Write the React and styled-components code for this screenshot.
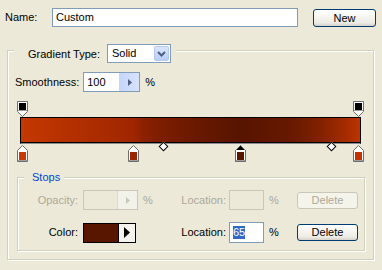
import React from 'react'
import styled, { createGlobalStyle } from 'styled-components'

const GlobalStyle = createGlobalStyle`
  html, body {
    margin: 0;
    padding: 0;
    background: #ece9d8;
  }
  body {
    font-family: "Liberation Sans", Arial, sans-serif;
    font-size: 11px;
    color: #000;
  }
`

const Page = styled.div`
  width: 382px;
  height: 270px;
  background: #ece9d8;
  overflow: hidden;
`

const TopRow = styled.div`
  display: flex;
  align-items: flex-start;
  padding: 8px 0 0 5px;
`

const Label = styled.span`
  display: block;
  width: ${p => p.$w || 'auto'};
  text-align: ${p => (p.$right ? 'right' : 'left')};
  color: ${p => (p.$disabled ? '#aca899' : '#000')};
  white-space: nowrap;
  line-height: 13px;
`

const NameLabel = styled(Label)`
  margin-top: 3px;
`

const TextInput = styled.div`
  box-sizing: border-box;
  width: ${p => p.$w}px;
  height: ${p => p.$h || 19}px;
  margin-left: ${p => p.$ml || 0}px;
  border: 1px solid ${p => (p.$disabled ? '#c9c7ba' : '#7f9db9')};
  background: ${p => (p.$disabled ? '#ece9d8' : '#fff')};
  display: flex;
  align-items: center;
  padding-left: 3px;
  line-height: 13px;
`

const Button = styled.div`
  box-sizing: border-box;
  width: ${p => p.$w || 61}px;
  height: ${p => p.$h || 17}px;
  margin-left: ${p => p.$ml || 0}px;
  margin-top: ${p => p.$mt || 0}px;
  border: 1px solid ${p => (p.$disabled ? '#c9c7ba' : '#003c74')};
  border-radius: 3px;
  background: ${p =>
    p.$disabled
      ? '#f5f4ea'
      : 'linear-gradient(#ffffff 0%, #f4f3ee 50%, #ecebe6 80%, #d6d0c5 100%)'};
  color: ${p => (p.$disabled ? '#aca899' : '#000')};
  display: flex;
  align-items: center;
  justify-content: center;
  line-height: 13px;
`

const Group = styled.div`
  box-sizing: border-box;
  position: relative;
  width: ${p => p.$w}px;
  height: ${p => p.$h}px;
  margin-left: ${p => p.$ml}px;
  margin-top: ${p => p.$mt}px;
  border: 1px solid #d0d0bf;
  box-shadow: inset 1px 1px 0 #fff, 1px 1px 0 #fff;
`

const Legend = styled.div`
  display: flex;
  width: fit-content;
  align-items: center;
  background: #ece9d8;
  margin-top: ${p => p.$mt}px;
  margin-left: ${p => p.$ml}px;
  padding: 0 ${p => p.$pr}px 0 ${p => p.$pl}px;
  height: ${p => p.$h}px;
`

const LegendTitle = styled.span`
  color: #0046d5;
  line-height: 13px;
`

const Select = styled.div`
  box-sizing: border-box;
  width: 64px;
  height: 19px;
  margin-left: 7px;
  border: 1px solid #7f9db9;
  background: #fff;
  display: flex;
  align-items: stretch;
`

const SelectValue = styled.span`
  flex: 1;
  padding-left: 4px;
  line-height: 17px;
`

const DropButton = styled.div`
  width: 15px;
  margin: 1px;
  border-radius: 2px;
  background: linear-gradient(#dbe6fd, #b9cdf8);
  border: 1px solid #b5c8f2;
  box-sizing: border-box;
  display: flex;
  align-items: center;
  justify-content: center;
`

const SmoothRow = styled.div`
  display: flex;
  align-items: center;
  margin: 9px 0 0 7px;
`

const Spinner = styled.div`
  box-sizing: border-box;
  width: ${p => p.$w || 57}px;
  height: ${p => p.$h || 20}px;
  margin-left: ${p => p.$ml || 0}px;
  border: 1px solid ${p => (p.$disabled ? '#c9c7ba' : '#7f9db9')};
  background: ${p => (p.$disabled ? '#ece9d8' : '#fff')};
  display: flex;
  align-items: stretch;
`

const SpinValue = styled.span`
  flex: 1;
  padding-left: 3px;
  line-height: 18px;
`

const SpinArrow = styled.div`
  width: 19px;
  background: ${p => (p.$disabled ? '#f2f1ea' : 'linear-gradient(90deg, #c6d6fb, #d7e2fc)')};
  border-left: 1px solid ${p => (p.$disabled ? '#dddbd0' : '#c6d6fb')};
  display: flex;
  align-items: center;
  justify-content: center;
`

const Pct = styled.span`
  display: block;
  width: ${p => p.$w || 11}px;
  margin-left: ${p => p.$ml || 5}px;
  color: ${p => (p.$disabled ? '#aca899' : '#000')};
  line-height: 13px;
`

const GradientArea = styled.div`
  position: relative;
  width: 341px;
  margin: 9px 0 0 12px;
  padding: 16px 0 18px;
`

const StopTrack = styled.div`
  position: absolute;
  left: 2px;
  right: 3px;
  top: 0;
  bottom: 0;
`

const Bar = styled.div`
  box-sizing: border-box;
  height: 27px;
  border: 1px solid #000;
  border-bottom: 1px solid #8c8c8c;
  background: linear-gradient(
    90deg,
    #c43800 0%,
    #a02600 33%,
    42%,
    #571400 65%,
    90%,
    #bc3300 100%
  );
  box-shadow: inset 0 -1px 0 #000;
`

const Marker = styled.svg`
  position: absolute;
  left: calc(${p => p.$pos}% - 5px);
  ${p => (p.$top ? 'top: 0;' : 'bottom: 0;')}
`

const Diamond = styled.div`
  position: absolute;
  left: calc(${p => p.$pos}% - 3px);
  bottom: 12px;
  width: 5px;
  height: 5px;
  border: 1px solid #000;
  background: #fff;
  transform: rotate(45deg);
`

const StopsGroup = styled(Group)``

const StopRow = styled.div`
  display: flex;
  align-items: center;
  margin-top: ${p => p.$mt}px;
`

const Swatch = styled.div`
  box-sizing: border-box;
  width: 53px;
  height: 20px;
  margin-left: 5px;
  margin-right: 2px;
  border: 1px solid #000;
  display: flex;
  align-items: stretch;
`

const SwatchColor = styled.div`
  flex: 1;
  background: ${p => p.$color};
`

const SwatchArrow = styled.div`
  width: 16px;
  border-left: 1px solid #000;
  background: #f4f3ee;
  display: flex;
  align-items: center;
  justify-content: center;
`

const Selected = styled.span`
  background: #316ac5;
  color: #fff;
  line-height: 13px;
`

const OpacityStop = ({ pos }) => (
  <Marker $top $pos={pos} width="11" height="16" viewBox="0 0 11 16">
    <path d="M0.5 0.5 H10.5 V10.5 L5.5 15.5 L0.5 10.5 Z" fill="#fff" stroke="#6d6d6d" />
    <rect x="2" y="2" width="7" height="7" fill="#000" />
    <rect x="1" y="9" width="9" height="1" fill="#a0a0a0" />
  </Marker>
)

const ColorStop = ({ pos, color, selected }) => (
  <Marker $pos={pos} width="11" height="17" viewBox="0 0 11 17">
    <path
      d="M5.5 0.5 L10.5 5.5 V16.5 H0.5 V5.5 Z"
      fill={selected ? '#000' : '#fff'}
      stroke="#6d6d6d"
    />
    <rect x="1" y="5" width="9" height="11" fill="#fff" />
    <rect x="2" y="7" width="7" height="8" fill={color} />
    <rect x="1" y="15" width="9" height="1" fill="#a0a0a0" />
  </Marker>
)

const App = () => {
  return (
    <Page>
      <GlobalStyle />
      <TopRow>
        <NameLabel $w="47px">Name:</NameLabel>
        <TextInput $w={246}>Custom</TextInput>
        <Button $w={63} $h={18} $ml={15} $mt={1}>New</Button>
      </TopRow>

      <Group $w={367} $h={210} $ml={7} $mt={23}>
        <Legend $mt={-7} $ml={6} $pl={14} $pr={5} $h={19}>
          <span>Gradient Type:</span>
          <Select>
            <SelectValue>Solid</SelectValue>
            <DropButton>
              <svg width="9" height="6" viewBox="0 0 9 6">
                <path d="M1 1 L4.5 4.5 L8 1" fill="none" stroke="#4d6185" strokeWidth="2" />
              </svg>
            </DropButton>
          </Select>
        </Legend>

        <SmoothRow>
          <Label>Smoothness:</Label>
          <Spinner $ml={4} $w={57} $h={20}>
            <SpinValue>100</SpinValue>
            <SpinArrow>
              <svg width="4" height="7" viewBox="0 0 4 7">
                <path d="M0 0 L4 3.5 L0 7 Z" fill="#4d6185" />
              </svg>
            </SpinArrow>
          </Spinner>
          <Pct $ml={5}>%</Pct>
        </SmoothRow>

        <GradientArea>
          <Bar />
          <StopTrack>
            <OpacityStop pos={0} />
            <OpacityStop pos={100} />
            <ColorStop pos={0} color="#c63a08" />
            <ColorStop pos={33} color="#9b2406" />
            <ColorStop pos={65} color="#581500" selected />
            <ColorStop pos={100} color="#c23300" />
            <Diamond $pos={42} />
            <Diamond $pos={92} />
          </StopTrack>
        </GradientArea>

        <StopsGroup $w={348} $h={74} $ml={9} $mt={15}>
          <Legend $mt={-7} $ml={6} $pl={8} $pr={4} $h={13}>
            <LegendTitle>Stops</LegendTitle>
          </Legend>

          <StopRow $mt={6}>
            <Label $w="60px" $right $disabled>Opacity:</Label>
            <Spinner $ml={5} $w={55} $h={20} $disabled>
              <SpinValue />
              <SpinArrow $disabled>
                <svg width="4" height="7" viewBox="0 0 4 7">
                  <path d="M0 0 L4 3.5 L0 7 Z" fill="#c9c7ba" />
                </svg>
              </SpinArrow>
            </Spinner>
            <Pct $disabled>%</Pct>
            <Label $w="72px" $right $disabled>Location:</Label>
            <TextInput $w={35} $h={20} $ml={3} $disabled />
            <Pct $disabled>%</Pct>
            <Button $ml={17} $disabled>Delete</Button>
          </StopRow>

          <StopRow $mt={12}>
            <Label $w="60px" $right>Color:</Label>
            <Swatch>
              <SwatchColor $color="#581500" />
              <SwatchArrow>
                <svg width="6" height="11" viewBox="0 0 6 11">
                  <path d="M0 0 L6 5.5 L0 11 Z" fill="#000" />
                </svg>
              </SwatchArrow>
            </Swatch>
            <Pct />
            <Label $w="72px" $right>Location:</Label>
            <TextInput $w={35} $h={21} $ml={3}>
              <Selected>65</Selected>
            </TextInput>
            <Pct>%</Pct>
            <Button $ml={17}>Delete</Button>
          </StopRow>
        </StopsGroup>
      </Group>
    </Page>
  )
}

export default App
